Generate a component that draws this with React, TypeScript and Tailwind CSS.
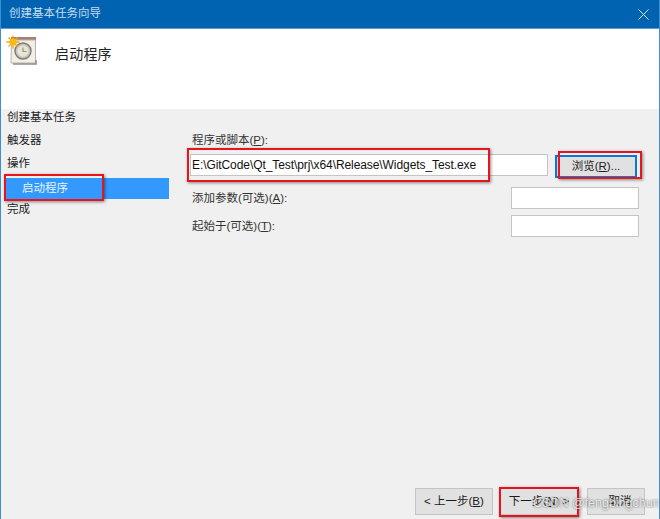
import React from 'react';

const font = '[font-family:"Liberation_Sans","Noto_Sans_CJK_SC",sans-serif]';
const redBox = 'absolute border-2 border-[#e8141c] shadow-[1px_1px_3px_rgba(0,0,0,0.45)]';

// 向导头部图标:日历 + 时钟 + 太阳
function TaskIcon() {
    return (
        <svg width="31" height="31" viewBox="0 0 31 31" className="shrink-0">
            <rect x="5" y="2" width="25" height="3" fill="#a5826b" />
            <path d="M5.5 5 H29.5 V28 H5 Z" fill="#f2efe6" stroke="#b5b3ab" />
            <path d="M7 29 H30 V25" fill="none" stroke="#8f8d88" strokeWidth="1.5" />
            <circle cx="17" cy="16" r="8" fill="#c9c6b8" stroke="#7d7b72" strokeWidth="1.4" />
            <circle cx="17" cy="16" r="5.6" fill="#e4e4e2" />
            <path d="M17 12.5 V16.5 H20.5" fill="none" stroke="#b98f3c" strokeWidth="1.2" />
            <g stroke="#f2a413" strokeWidth="1.3">
                <path d="M7 0.5 V13.5 M0.5 7 H13.5 M2.5 2.5 L11.5 11.5 M11.5 2.5 L2.5 11.5" />
            </g>
            <circle cx="7" cy="7" r="3.6" fill="#fdb813" />
        </svg>
    );
}

function WizardButton({ children, highlight, className }: { children: React.ReactNode; highlight?: boolean; className?: string }) {
    return (
        <div className="relative">
            <button className={`w-full h-[27px] bg-[#e1e1e1] border border-[#c4c4c4] text-[11.5px] text-[#1a1a1a] flex items-center justify-center whitespace-pre ${className ?? ''}`}>
                {children}
            </button>
            {highlight && <div className={`${redBox} -left-px -right-px -top-px -bottom-[2px]`} />}
        </div>
    );
}

function NavItem({ label }: { label: string }) {
    return <div className="h-[16px] leading-[16px] pl-[6px] text-[11.5px] text-[#222]">{label}</div>;
}

export default function App() {
    return (
        <div className={`relative w-[660px] h-[519px] flex flex-col overflow-hidden bg-[#f0f0f0] border-x border-x-[#3f8fd0] ${font}`}>
            {/* 标题栏 */}
            <div className="h-[29px] shrink-0 -mx-px px-[9px] bg-[#0063b1] border-b border-b-[#5a9bd0] flex items-center justify-between">
                <span className="text-[11.5px] text-[#c6dcef]">创建基本任务向导</span>
                <svg width="11" height="11" viewBox="0 0 11 11" className="mr-[2px]">
                    <path d="M0.5 0.5 L10.5 10.5 M10.5 0.5 L0.5 10.5" stroke="#d5e5f3" strokeWidth="1" />
                </svg>
            </div>

            {/* 头部 */}
            <div className="h-[80px] shrink-0 bg-white flex items-start pl-[5px] pt-[6px] gap-[18px]">
                <TaskIcon />
                <span className="text-[14px] tracking-[0.2px] leading-[20px] text-[#222] mt-[9px]">启动程序</span>
            </div>

            <div className="flex-1 flex min-h-0">
                {/* 左侧步骤 */}
                <div className="w-[168px] shrink-0">
                    <div className="flex flex-col gap-[7px]">
                        <NavItem label="创建基本任务" />
                        <NavItem label="触发器" />
                        <NavItem label="操作" />
                    </div>
                    <div className="relative h-[21px] mt-[7px] ml-[5px] bg-[#3399ff] pl-[16px] flex items-center text-[11.5px] text-[#e8f3ff]">
                        启动程序
                        <div className={`${redBox} -left-[2px] -top-[4px] w-[100px] h-[27px]`} />
                    </div>
                    <div className="mt-[2px]">
                        <NavItem label="完成" />
                    </div>
                </div>

                {/* 右侧表单 */}
                <div className="flex-1 flex flex-col pt-[23px] pl-[23px] pr-[20px]">
                    <div className="text-[11.5px] leading-[16px] text-[#333]">程序或脚本(<span className="underline">P</span>):</div>
                    <div className="flex items-start mt-[6px]">
                        <div className="relative -ml-[2px] w-[358px] h-[22px] bg-white border border-[#c4c4c4] flex items-center pl-[1px] text-[12px] tracking-[-0.08px] text-[#111]">
                            E:\GitCode\Qt_Test\prj\x64\Release\Widgets_Test.exe
                            <div className={`${redBox} -left-[4px] -top-[7px] w-[303px] h-[34px]`} />
                        </div>
                        <div className="relative ml-[7px] mt-px">
                            <button className="w-[82px] h-[23px] bg-[#e1e1e1] border-2 border-[#0a78d7] text-[11.5px] text-[#222] flex items-center justify-center">
                                浏览(<span className="underline">R</span>)...
                            </button>
                            <div className={`${redBox} left-[3px] -top-[4px] w-[84px] h-[28px]`} />
                        </div>
                    </div>
                    <div className="flex items-center justify-between mt-[9px]">
                        <span className="text-[11.5px] text-[#333] translate-y-px">添加参数(可选)(<span className="underline">A</span>):</span>
                        <div className="w-[128px] h-[22px] bg-white border border-[#c4c4c4]" />
                    </div>
                    <div className="flex items-center justify-between mt-[6px]">
                        <span className="text-[11.5px] text-[#333] translate-y-px">起始于(可选)(<span className="underline">T</span>):</span>
                        <div className="w-[128px] h-[22px] bg-white border border-[#c4c4c4]" />
                    </div>
                </div>
            </div>

            {/* 底部按钮 */}
            <div className="h-[31px] shrink-0 flex justify-end items-start pr-[14px]">
                <div className="w-[78px]"><WizardButton>{'< 上一步('}<span className="underline">B</span>)</WizardButton></div>
                <div className="w-[78px] ml-[7px]"><WizardButton highlight>下一步(<span className="underline">N</span>{') >'}</WizardButton></div>
                <div className="w-[58px] ml-[9px]"><WizardButton className="pl-[8px]">取消</WizardButton></div>
            </div>

            {/* 水印 */}
            <div className="absolute left-[532px] top-[495px] text-[12.5px] leading-[16px] text-white/80 [text-shadow:0_0_2px_rgba(50,50,50,0.9)] whitespace-nowrap">
                CSDN @fengbingchun
            </div>
        </div>
    );
}
